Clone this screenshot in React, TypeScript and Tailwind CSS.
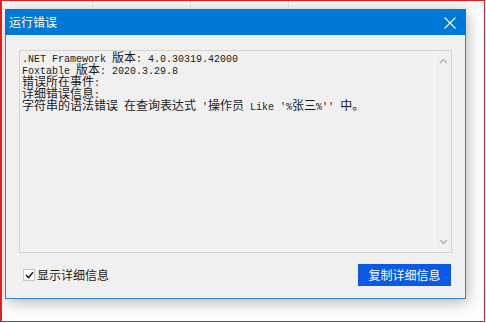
import React from "react"

const cjk = /([\u3000-\u303f\u4e00-\u9fff\uff00-\uffef]+)/

function MixedLine({ text }: { text: string }) {
  const parts = text.split(cjk)
  return (
    <div className="h-[12px] leading-[12px] whitespace-pre">
      {parts.map((p, i) =>
        cjk.test(p) ? (
          <span key={i} className="text-[12px] font-['Noto_Sans_CJK_SC',sans-serif]">
            {p}
          </span>
        ) : (
          <span key={i}>{p}</span>
        )
      )}
    </div>
  )
}

const lines = [
  ".NET Framework 版本: 4.0.30319.42000",
  "Foxtable 版本: 2020.3.29.8",
  "错误所在事件:",
  "详细错误信息:",
  "字符串的语法错误 在查询表达式 '操作员 Like '%张三%'' 中。",
]

export default function App() {
  return (
    <div className="w-[486px] h-[323px] bg-white">
      <div className="w-[485px] h-[322px] border border-[#e02020] border-l-2 bg-white overflow-hidden">
        {/* bit of the sheet grid peeking above the dialog */}
        <div className="h-[8px] bg-[#f5f8f8] flex">
          <div className="w-[90px]" />
          <div className="w-px bg-[#dadada]" />
          <div className="w-[97px]" />
          <div className="w-px bg-[#dadada]" />
          <div className="w-[97px]" />
          <div className="w-px bg-[#dadada]" />
        </div>

        <div className="ml-[3px] w-[461px] shadow-[2px_4px_14px_rgba(0,0,0,0.28)] font-['Noto_Sans_CJK_SC',sans-serif]">
          <div className="h-[26px] bg-[#0078d7] flex items-center justify-between pl-[4px] pr-[10px]">
            <span className="text-white text-[12px] leading-none">运行错误</span>
            <svg width="12" height="12" viewBox="0 0 12 12" className="mt-[1px]">
              <path d="M0.5 0.5 L11.5 11.5 M11.5 0.5 L0.5 11.5" stroke="white" strokeWidth="1.1" />
            </svg>
          </div>

          <div className="h-[264px] bg-[#f0f0f0] border-x border-b border-[#2f86cf] pt-[15px] px-[13px]">
            <div className="h-[203px] border border-[#d5d5d5] bg-[#f0f0f0] flex">
              <div className="flex-1 pl-[2px] text-[10px] text-[#1a1a1a] font-['Liberation_Mono',monospace]">
                {lines.map((l) => (
                  <MixedLine key={l} text={l} />
                ))}
              </div>
              <div className="w-[17px] border-l border-[#f8f8f8] flex flex-col justify-between items-center py-[7px]">
                <svg width="9" height="6" viewBox="0 0 9 6">
                  <path d="M1 5 L4.5 1.5 L8 5" stroke="#b0b0b0" strokeWidth="1.3" fill="none" />
                </svg>
                <svg width="9" height="6" viewBox="0 0 9 6">
                  <path d="M1 1 L4.5 4.5 L8 1" stroke="#b0b0b0" strokeWidth="1.3" fill="none" />
                </svg>
              </div>
            </div>

            <div className="mt-[11px] flex items-center justify-between pr-[1px]">
              <label className="flex items-center gap-[2px] pl-[4px] text-[12px] text-[#1a1a1a]">
                <span className="w-[12px] h-[12px] bg-white border border-[#c8c8c8] flex items-center justify-center">
                  <svg width="9" height="8" viewBox="0 0 9 8">
                    <path d="M1 4 L3.5 6.5 L8 1.2" stroke="#222" strokeWidth="1.6" fill="none" />
                  </svg>
                </span>
                显示详细信息
              </label>
              <button className="w-[93px] h-[22px] bg-[#0a5ae6] text-white text-[12px] leading-none">
                复制详细信息
              </button>
            </div>
          </div>
        </div>
      </div>
    </div>
  )
}
